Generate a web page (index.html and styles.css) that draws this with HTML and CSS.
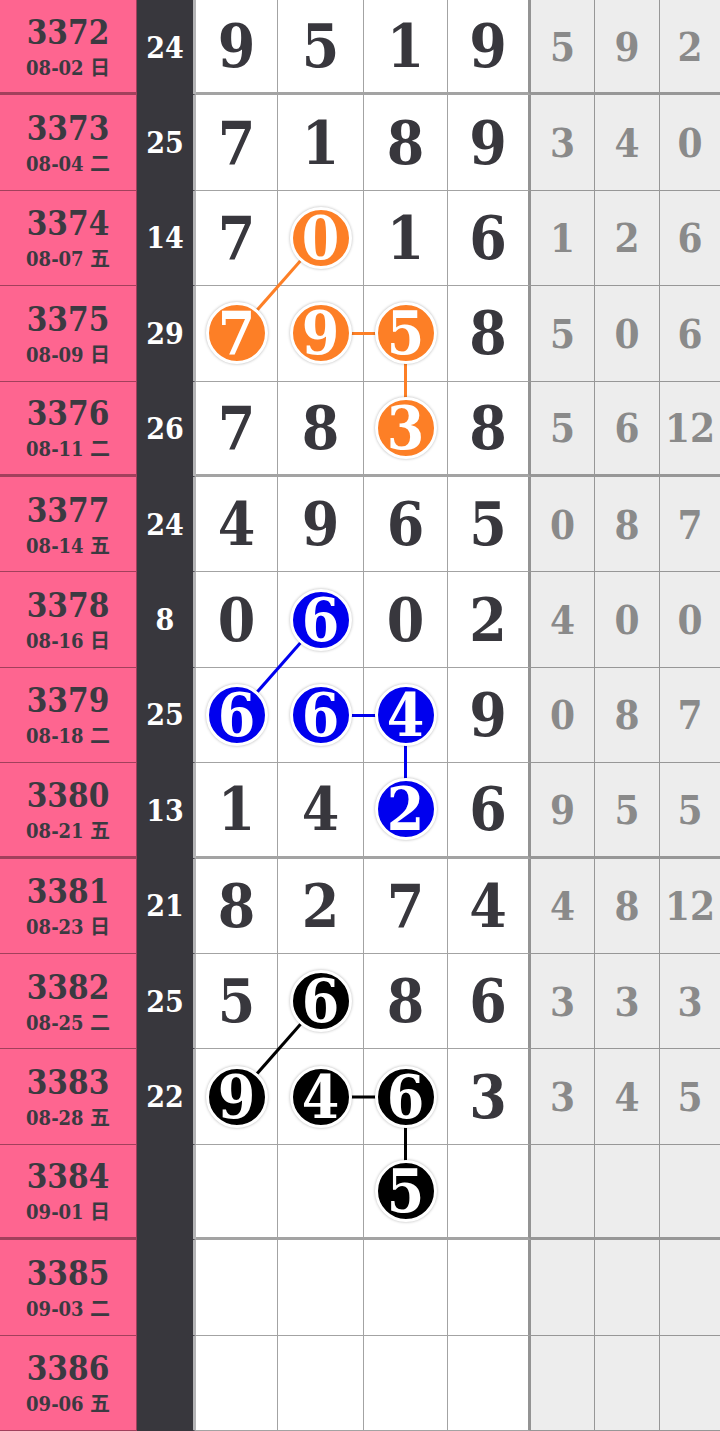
FILE: index.html
```html
<!DOCTYPE html>
<html>

<head>
    <meta charset="utf-8">
    <link rel="stylesheet" href="styles.css">
</head>

<body>

    <div class="chart">
        <div class="grid" id="grid"></div>

        <svg class="links" width="720" height="1431" viewBox="0 0 720 1431">
            <g stroke="#fd7f26" stroke-width="3">
                <line x1="320.5" y1="238" x2="236.5" y2="333.5" />
                <line x1="320.5" y1="333.5" x2="405.5" y2="333.5" />
                <line x1="405.5" y1="333.5" x2="405.5" y2="429" />
            </g>
            <g stroke="#0000ee" stroke-width="3">
                <line x1="320.5" y1="620" x2="236.5" y2="715.5" />
                <line x1="320.5" y1="715.5" x2="405.5" y2="715.5" />
                <line x1="405.5" y1="715.5" x2="405.5" y2="810.5" />
            </g>
            <g stroke="#000" stroke-width="3">
                <line x1="320.5" y1="1001.5" x2="236.5" y2="1097" />
                <line x1="320.5" y1="1097" x2="405.5" y2="1097" />
                <line x1="405.5" y1="1097" x2="405.5" y2="1192" />
            </g>
        </svg>
    </div>

    <script>
        // issue, date, weekday, sum, four digits, three spans
        const rows = [
            ['3372', '08-02', '日', '24', ['9', '5', '1', '9'], ['5', '9', '2']],
            ['3373', '08-04', '二', '25', ['7', '1', '8', '9'], ['3', '4', '0']],
            ['3374', '08-07', '五', '14', ['7', '0', '1', '6'], ['1', '2', '6']],
            ['3375', '08-09', '日', '29', ['7', '9', '5', '8'], ['5', '0', '6']],
            ['3376', '08-11', '二', '26', ['7', '8', '3', '8'], ['5', '6', '12']],
            ['3377', '08-14', '五', '24', ['4', '9', '6', '5'], ['0', '8', '7']],
            ['3378', '08-16', '日', '8', ['0', '6', '0', '2'], ['4', '0', '0']],
            ['3379', '08-18', '二', '25', ['6', '6', '4', '9'], ['0', '8', '7']],
            ['3380', '08-21', '五', '13', ['1', '4', '2', '6'], ['9', '5', '5']],
            ['3381', '08-23', '日', '21', ['8', '2', '7', '4'], ['4', '8', '12']],
            ['3382', '08-25', '二', '25', ['5', '6', '8', '6'], ['3', '3', '3']],
            ['3383', '08-28', '五', '22', ['9', '4', '6', '3'], ['3', '4', '5']],
            ['3384', '09-01', '日', '', ['', '', '5', ''], ['', '', '']],
            ['3385', '09-03', '二', '', ['', '', '', ''], ['', '', '']],
            ['3386', '09-06', '五', '', ['', '', '', ''], ['', '', '']]
        ];

        // row index -> { column index: ball colour }
        const balls = {
            2: { 1: 'orange' },
            3: { 0: 'orange', 1: 'orange', 2: 'orange' },
            4: { 2: 'orange' },
            6: { 1: 'blue' },
            7: { 0: 'blue', 1: 'blue', 2: 'blue' },
            8: { 2: 'blue' },
            10: { 1: 'black' },
            11: { 0: 'black', 1: 'black', 2: 'black' },
            12: { 2: 'black' }
        };

        const thickAfter = [0, 4, 8, 12];
        const grid = document.getElementById('grid');

        rows.forEach((row, i) => {
            const [issue, date, day, sum, digits, spans] = row;
            const edge = thickAfter.includes(i) ? ' thick' : '';
            let html = `
                <div class="cell issue${edge}">
                    <span class="issue-no">${issue}</span>
                    <span class="issue-date">${date} ${day}</span>
                </div>
                <div class="cell sum">${sum}</div>`;

            digits.forEach((d, c) => {
                const colour = balls[i] && balls[i][c];
                const inner = colour ? `<span class="ball ${colour}">${d}</span>` : d;
                html += `<div class="cell digit${c === 3 ? ' last' : ''}${edge}">${inner}</div>`;
            });

            spans.forEach((s, c) => {
                html += `<div class="cell span${c === 2 ? ' end' : ''}${edge}">${s}</div>`;
            });

            grid.insertAdjacentHTML('beforeend', html);
        });
    </script>
</body>

</html>
```

FILE: styles.css
```css
body {
    margin: 0;
    background-color: #fff;
    font-family: "DejaVu Serif", "Liberation Serif", "Noto Sans CJK SC", serif;
    font-weight: bold;
    font-stretch: condensed;
}

.chart {
    position: relative;
    width: 720px;
    height: 1431px;
    overflow: hidden;
}

.grid {
    display: grid;
    grid-template-columns: 137px 59px 82px 86px 84px 83px 64px 65px 60px;
    grid-template-rows: repeat(15, 1fr);
    height: 1431px;
}

.cell {
    box-sizing: border-box;
    display: flex;
    align-items: center;
    justify-content: center;
    border-bottom: 1px solid rgba(0, 0, 0, 0.36);
    border-right: 1px solid rgba(0, 0, 0, 0.36);
}

.cell.thick {
    border-bottom-width: 3px;
}

.issue {
    flex-direction: column;
    background-color: #fe6590;
    color: #3b3a41;
}

.issue-no {
    font-size: 33px;
    line-height: 38px;
}

.issue-date {
    font-size: 20px;
    line-height: 22px;
    margin-top: 5px;
}

.sum {
    background-color: #38373d;
    color: #fff;
    font-size: 30px;
    border-bottom-color: transparent;
    border-right: 3px solid #b4b4b6;
}

.digit {
    background-color: #fff;
    color: #38373d;
    font-size: 60px;
    line-height: 1;
}

.digit.last {
    border-right: 3px solid rgba(0, 0, 0, 0.42);
}

.span {
    background-color: #ededed;
    color: #8a8a8a;
    font-size: 40px;
}

.span.end {
    border-right: none;
}

.ball {
    position: relative;
    z-index: 2;
    display: flex;
    align-items: center;
    justify-content: center;
    width: 56px;
    height: 56px;
    border: 3px solid #fff;
    border-radius: 50%;
    color: #fff;
    box-shadow: 0 0 3px rgba(0, 0, 0, 0.3);
}

.ball.orange {
    background-color: #fd7f26;
}

.ball.blue {
    background-color: #0000ee;
}

.ball.black {
    background-color: #000;
}

.links {
    position: absolute;
    top: 0;
    left: 0;
    z-index: 1;
    pointer-events: none;
}
```
